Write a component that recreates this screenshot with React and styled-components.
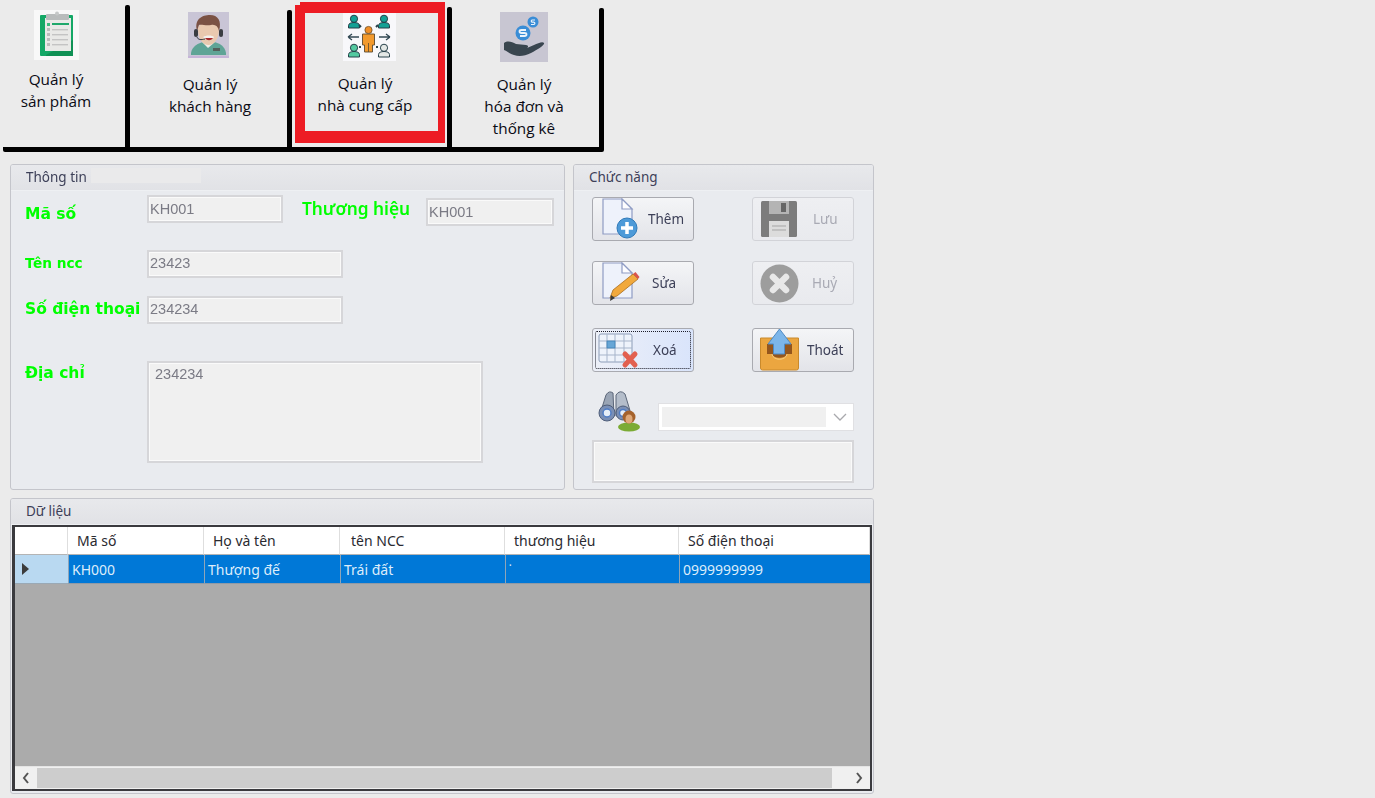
// App.jsx
import React from 'react';
import styled, { createGlobalStyle } from 'styled-components';

const GlobalStyle = createGlobalStyle`
  html, body { margin: 0; padding: 0; background: #ebebeb; }
  body { width: 1375px; height: 798px; overflow: hidden; font-family: "Noto Sans", sans-serif; }
  * { box-sizing: border-box; }
`;

const Page = styled.div`
  width: 1375px;
  height: 798px;
  background: #ebebeb;
`;

/* top menu */
const TabBar = styled.div`
  display: flex;
  width: 601px;
  height: 152px;
  margin-left: 3px;
  border-bottom: 5px solid #000;
  border-radius: 0 0 2px 2px;
`;

const Tab = styled.div`
  display: flex;
  flex-direction: column;
  align-items: center;
  width: ${({ $w }) => $w}px;
  padding-top: ${({ $top }) => $top}px;
  padding-right: ${({ $shift }) => $shift || 0}px;
`;

const Divider = styled.div`
  width: 5px;
  margin-top: ${({ $top }) => $top}px;
  background: #000;
  border-radius: 2px 2px 0 0;
`;

const RedFrame = styled.div`
  position: relative;
  display: flex;
  flex-direction: column;
  align-items: center;
  width: 150px;
  height: 141px;
  margin: 2px 2px 0 3px;
  border-style: solid;
  border-color: #ed1c24;
  border-width: 11px 7px 12px 10px;
  &::before {
    content: '';
    position: absolute;
    left: -10px;
    top: -11px;
    width: 5px;
    height: 3px;
    background: #ebebeb;
  }
`;

const TabLabel = styled.div`
  margin-top: ${({ $gap }) => $gap}px;
  margin-right: ${({ $shift }) => $shift || 0}px;
  font-family: "Open Sans", "Noto Sans", sans-serif;
  font-size: 15.3px;
  line-height: 22px;
  color: #0a0a14;
  text-align: center;
  white-space: nowrap;
`;

const TabIcon = styled.svg`
  display: block;
  flex: none;
  margin-right: ${({ $right }) => $right || 0}px;
  filter: blur(0.5px);
`;

/* panels */
const PanelRow = styled.div`
  display: flex;
  gap: 8px;
  margin: 12px 0 0 10px;
  filter: blur(0.35px);
`;

const Panel = styled.section`
  width: ${({ $w }) => $w}px;
  height: ${({ $h }) => $h}px;
  margin: ${({ $margin }) => $margin || 0};
  background: #e9ebef;
  border: 1px solid #c4c5cb;
  border-radius: 3px;
  overflow: hidden;
`;

const PanelHead = styled.header`
  display: flex;
  align-items: center;
  gap: 4px;
  height: 26px;
  padding: 0 0 1px 15px;
  background: linear-gradient(#e8e9ec, #e1e2e6);
  border-bottom: 1px solid #eef0f3;
  font-family: "Noto Sans", sans-serif;
  font-size: 13.5px;
  color: #3d4058;
`;

const Smudge = styled.span`
  width: 110px;
  height: 15px;
  margin-top: -3px;
  background: #eaeaeb;
`;

const InfoBody = styled.div`
  display: flex;
  flex-direction: column;
`;

const FormRow = styled.div`
  display: flex;
  align-items: flex-start;
  margin-top: ${({ $top }) => $top}px;
`;

const Label = styled.div`
  width: ${({ $w }) => $w || 122}px;
  margin-left: ${({ $left }) => $left ?? 14}px;
  margin-top: ${({ $dy }) => $dy || 0}px;
  font-family: "DejaVu Sans", sans-serif;
  font-weight: 700;
  font-size: ${({ $size }) => $size || 15.5}px;
  line-height: 20px;
  color: #00ff00;
  white-space: nowrap;
`;

const BrandLabel = styled(Label)`
  font-family: "Noto Sans", sans-serif;
  font-weight: 600;
  font-size: 17.3px;
`;

const Field = styled.div`
  width: ${({ $w }) => $w}px;
  height: ${({ $h }) => $h || 28}px;
  margin-top: ${({ $dy }) => $dy || 0}px;
  padding: ${({ $pad }) => $pad || '3px 1px 0 1px'};
  background: #f0f0f0;
  border: 2px solid #d6d6d9;
  box-shadow: inset 0 0 0 1px #fafafa;
  font-family: "Liberation Sans", sans-serif;
  font-size: 14.5px;
  line-height: 17px;
  color: #7b7b85;
`;

/* function panel */
const FuncBody = styled.div`
  display: flex;
  flex-direction: column;
  padding-left: 18px;
`;

const ButtonRow = styled.div`
  display: flex;
  gap: 58px;
  margin-top: ${({ $top }) => $top}px;
`;

const ActionButton = styled.button`
  position: relative;
  display: flex;
  align-items: center;
  width: 102px;
  height: 44px;
  padding: 0 0 0 ${({ $pad }) => $pad}px;
  background: linear-gradient(#f4f5f7, #e3e4e9);
  border: 1px solid #a9aab0;
  border-radius: 3px;
  font-family: "Noto Sans", sans-serif;
  font-size: 13.5px;
  color: #3d4058;
`;

const MutedButton = styled(ActionButton)`
  background: linear-gradient(#eeeff2, #e9eaee);
  border-color: #d2d3d8;
  color: #a9aab4;
`;

const FocusButton = styled(ActionButton)`
  background: linear-gradient(90deg, #edf0f8, #d9e4fb);
  border-color: #a9aab0;
  &::after {
    content: '';
    position: absolute;
    inset: 2px;
    border: 1px dotted #1c1c28;
    border-radius: 2px;
  }
`;

const ButtonText = styled.span`
  margin-left: ${({ $gap }) => $gap}px;
`;

const ButtonIcon = styled.svg`
  display: block;
  flex: none;
  margin-top: ${({ $dy }) => $dy || 0}px;
  filter: blur(0.3px);
`;

const SearchRow = styled.div`
  display: flex;
  align-items: flex-start;
  margin-top: 18px;
  padding-left: 5px;
`;

const Combo = styled.div`
  display: flex;
  align-items: center;
  width: 196px;
  height: 28px;
  margin: 13px 0 0 16px;
  padding: 3px;
  background: #fff;
  border: 1px solid #e0e0e3;
`;

const ComboInner = styled.div`
  width: 164px;
  height: 20px;
  background: #f0f0f0;
`;

const ComboArrow = styled.svg`
  display: block;
  margin-left: 7px;
`;

const NoteBox = styled.div`
  width: 262px;
  height: 43px;
  margin-top: 8px;
  background: #f0f0f0;
  border: 2px solid #d6d6d9;
  box-shadow: inset 0 0 0 1px #fafafa;
`;

/* data grid */
const DataGrid = styled.div`
  display: flex;
  flex-direction: column;
  width: 860px;
  height: 266px;
  margin-left: 1px;
  background: #ababab;
  border-style: solid;
  border-color: #3a3a3e;
  border-width: 2px 2px 2px 3px;
  font-family: "Noto Sans", sans-serif;
`;

const GridLine = styled.div`
  display: grid;
  grid-template-columns: 53px 136px 136px 165px 174px 1fr;
  height: ${({ $h }) => $h}px;
  flex: none;
`;

const HeadCell = styled.div`
  display: flex;
  align-items: center;
  padding-left: ${({ $pad }) => $pad}px;
  background: #fff;
  border-right: 1px solid #dedede;
  border-bottom: 1px solid #b4b4b4;
  font-size: 14px;
  color: #2a2a30;
  white-space: nowrap;
`;

const Cell = styled.div`
  display: flex;
  align-items: center;
  padding-left: 3px;
  background: #0078d7;
  border-left: 1px solid #8fa5b8;
  border-bottom: 1px solid #8f9aa6;
  font-size: 14px;
  color: #dcedfb;
  white-space: nowrap;
`;

const RowHeader = styled.div`
  display: flex;
  align-items: center;
  padding-left: 7px;
  background: #b9d9f1;
  border-bottom: 1px solid #9aa9b5;
`;

const RowArrow = styled.span`
  width: 0;
  height: 0;
  border-left: 7px solid #3c3c3c;
  border-top: 6px solid transparent;
  border-bottom: 6px solid transparent;
`;

const GridFill = styled.div`
  flex: 1;
  background: #ababab;
`;

const ScrollBar = styled.div`
  display: flex;
  align-items: center;
  flex: none;
  height: 23px;
  background: #f0f0f0;
  border-top: 1px solid #e4e4e4;
`;

const ScrollButton = styled.button`
  display: flex;
  align-items: center;
  justify-content: center;
  width: 22px;
  height: 100%;
  padding: 0;
  background: none;
  border: 0;
`;

const ScrollThumb = styled.div`
  flex: 1;
  height: 20px;
  margin-right: 16px;
  background: #cdcdcd;
`;

const ClipboardIcon = () => (
  <TabIcon width="45" height="50" viewBox="0 0 45 50">
    <rect width="45" height="50" fill="#f8f8f8" />
    <rect x="6" y="5" width="33" height="41" rx="1" fill="#14a866" />
    <path d="M12 45 L39 30 V46 H12Z" fill="#109155" />
    <rect x="11" y="8" width="26" height="33" fill="#e9e9e7" />
    <rect x="12" y="4" width="23" height="6" rx="1" fill="#b9bcbc" />
    <circle cx="23" cy="3.5" r="2" fill="#c6c8c8" />
    <rect x="13" y="13" width="3" height="3" fill="#3dbb80" />
    <rect x="18" y="13" width="17" height="2" fill="#1fa86b" />
    {[18, 23, 28, 33].map((y) => (
      <g key={y}>
        <rect x="13" y={y} width="3" height="3" fill="#bcbcbc" />
        <rect x="18" y={y + 1} width="16" height="1.4" fill="#c4c4c4" />
      </g>
    ))}
  </TabIcon>
);

const AgentIcon = () => (
  <TabIcon width="41" height="46" viewBox="0 0 41 46">
    <rect width="41" height="46" fill="#c9c5d6" />
    <rect y="44" width="41" height="2" fill="#c6b5d8" />
    <path d="M3 41 C4 34 11 31 15 30 L26 30 C31 31 37 34 38 41 L38 43 H3Z" fill="#5fa496" />
    <path d="M14 30 L20 36 L27 30 L25 27 H16Z" fill="#f2eee8" />
    <rect x="25" y="36" width="7" height="3" fill="#55605c" />
    <path d="M10 17 C10 8 31 8 31 17 C31 27 26 33 20.5 33 C15 33 10 27 10 17Z" fill="#e9c9af" />
    <path d="M9 19 C6 7 14 3 22 3 C30 3 34 9 31 19 C30 14 27 12 23 13 C18 14 13 12 11 13 C10 15 10 17 9 19Z" fill="#7b5244" />
    <rect x="6" y="17" width="4" height="8" rx="2" fill="#3a3d42" />
    <rect x="31" y="17" width="4" height="8" rx="2" fill="#3a3d42" />
    <path d="M15 25 C18 29 24 29 26 25 C24 23 18 23 15 25Z" fill="#f4f1ee" />
    <path d="M17 26 C19 29 23 29 25 26Z" fill="#a5282a" />
    <path d="M9 25 C10 28 13 28 17 27" stroke="#3a3d42" strokeWidth="1" fill="none" />
  </TabIcon>
);

const Person = ({ x, y, color }) => (
  <g transform={`translate(${x} ${y})`}>
    <circle cx="6" cy="3.8" r="3.6" fill={color} stroke="#26404a" strokeWidth="1" />
    <path d="M0.5 13 V10.5 C0.5 8.5 3 7.5 6 7.5 C9 7.5 11.5 8.5 11.5 10.5 V13Z" fill={color} stroke="#26404a" strokeWidth="1" />
  </g>
);

const SupplierIcon = () => (
  <TabIcon $right={4} width="53" height="48" viewBox="0 0 53 48">
    <rect width="53" height="48" fill="#f8f8fb" />
    <Person x="5" y="2" color="#14a094" />
    <Person x="35" y="2" color="#14a094" />
    <Person x="5" y="31" color="#53c9a0" />
    <Person x="35" y="31" color="#e4e8e6" />
    <circle cx="25.5" cy="17" r="3.6" fill="#f08f28" stroke="#6b4b26" strokeWidth="0.8" />
    <path d="M19.5 21 H31.5 V32 H29.5 V39 H21.5 V32 H19.5Z" fill="#f29a2e" stroke="#5a4a30" strokeWidth="0.9" />
    <path d="M25.5 30 V39" stroke="#5a4a30" strokeWidth="0.8" />
    <path d="M5 24 H16 M5 24 L9 21 M5 24 L9 27 M36 24 H47 M47 24 L43 21 M47 24 L43 27" stroke="#344a55" strokeWidth="1.3" fill="none" />
    <path d="M18 14 L16 12 M33 14 L35 12" stroke="#26404a" strokeWidth="2" />
    <rect x="16" y="33" width="2" height="2" fill="#26404a" />
    <rect x="33" y="33" width="2" height="2" fill="#26404a" />
  </TabIcon>
);

const MoneyIcon = () => (
  <TabIcon width="48" height="50" viewBox="0 0 48 50">
    <rect width="48" height="50" fill="#c8c6d2" />
    <circle cx="33" cy="10" r="5.5" fill="#3a8dd6" />
    <circle cx="23" cy="21" r="7.5" fill="#3a8dd6" />
    <path d="M35 8 H32 A1.2 1.2 0 0 0 32 10.2 H34 A1.2 1.2 0 0 1 34 12.5 H31" stroke="#eaf3fb" strokeWidth="1.2" fill="none" />
    <path d="M26 18 H21.5 A2 1.5 0 0 0 21.5 21 H24.5 A2 1.5 0 0 1 24.5 24 H20" stroke="#eaf3fb" strokeWidth="1.8" fill="none" />
    <path d="M4 31 C8 28 12 30 16 32 L26 33 C28 33 29 35 27 36 L34 33 C38 31 43 29 44 31 C45 33 38 37 31 41 C25 44 19 45 14 43 C10 42 7 39 4 38Z" fill="#39454f" />
  </TabIcon>
);

const PageShape = () => (
  <g>
    <path d="M1 1 H20 L30 11 V36 H1Z" fill="#eef2fb" stroke="#8f9cc4" strokeWidth="1.2" />
    <path d="M20 1 V11 H30Z" fill="#fdfdff" stroke="#8f9cc4" strokeWidth="1.2" />
  </g>
);

const AddIcon = () => (
  <ButtonIcon width="36" height="42" viewBox="0 0 36 42">
    <PageShape />
    <circle cx="25" cy="30" r="10" fill="#4d9ad8" stroke="#2f79b8" />
    <path d="M25 24 V36 M19 30 H31" stroke="#fff" strokeWidth="3.5" />
  </ButtonIcon>
);

const EditIcon = () => (
  <ButtonIcon width="38" height="42" viewBox="0 0 38 42">
    <PageShape />
    <path d="M8 36 L11 28 L31 12 L36 17 L15 34Z" fill="#f1a93d" stroke="#a86d1e" strokeWidth="0.8" />
    <path d="M31 12 L33.5 10 L37.5 15 L36 17Z" fill="#d9534a" />
    <path d="M8 39 L9 33 L13 36Z" fill="#3a3a3a" />
  </ButtonIcon>
);

const SaveIcon = () => (
  <ButtonIcon width="36" height="36" viewBox="0 0 36 36">
    <rect width="36" height="36" rx="1.5" fill="#7c7c7c" />
    <rect x="8" y="0" width="20" height="13" fill="#b4b4b4" />
    <rect x="20" y="2" width="5" height="9" fill="#666" />
    <rect x="8" y="20" width="20" height="16" fill="#dcdcdc" />
    <path d="M11 25 H25 M11 29 H25" stroke="#a5a5a5" strokeWidth="1" />
  </ButtonIcon>
);

const CancelIcon = () => (
  <ButtonIcon width="39" height="39" viewBox="0 0 39 39">
    <circle cx="19.5" cy="19.5" r="19" fill="#9d9d9d" />
    <path d="M13 13 L26 26 M26 13 L13 26" stroke="#e8e8e8" strokeWidth="6.5" strokeLinecap="round" />
  </ButtonIcon>
);

const DeleteIcon = () => (
  <ButtonIcon width="43" height="38" viewBox="0 0 43 38">
    <rect x="2" y="3" width="33" height="28" rx="2" fill="#eef3fb" stroke="#8d9db8" />
    <path d="M10 3 V31 M18 3 V31 M27 3 V31 M2 10 H35 M2 17 H35 M2 24 H35" stroke="#a7b5cb" strokeWidth="1" />
    <rect x="10" y="10" width="8" height="7" fill="#67a6d6" stroke="#3d7fb4" strokeWidth="0.8" />
    <path d="M28 23 L38 34 M38 23 L28 34" stroke="#e2604f" strokeWidth="5" strokeLinecap="round" />
  </ButtonIcon>
);

const ExitIcon = () => (
  <ButtonIcon width="39" height="42" viewBox="0 0 39 42" $dy={-1}>
    <path d="M0.5 9 H38.5 V39 Q38.5 41 36.5 41 H2.5 Q0.5 41 0.5 39Z" fill="#eba640" stroke="#c98a2c" />
    <path d="M7 15 H32 V25 H27 C26 30 13 30 12 25 H7Z" fill="#94561d" />
    <path d="M12 25 C13 32 26 32 27 25" stroke="#f6cf86" strokeWidth="1" fill="none" />
    <path d="M19.5 0 L31 15 H24.5 V25 H13.5 V15 H8Z" fill="#7cb6ea" stroke="#4f8ac4" />
  </ButtonIcon>
);

const FinderIcon = () => (
  <svg width="45" height="42" viewBox="0 0 45 42" style={{ display: 'block', flex: 'none' }}>
    <path d="M3 24 L9 5 Q12 0 16 3 L17 26Z" fill="#9aa5b5" stroke="#5b6678" />
    <path d="M19 26 L19 5 Q23 -1 28 4 L34 24Z" fill="#b4bdca" stroke="#5b6678" />
    <circle cx="10" cy="23" r="8" fill="#7a8fb5" stroke="#4f5d78" />
    <circle cx="10" cy="23" r="4" fill="#e6eef8" stroke="#4f7cc4" strokeWidth="1.5" />
    <circle cx="26" cy="23" r="7" fill="#7a8fb5" stroke="#4f5d78" />
    <circle cx="26" cy="23" r="3.5" fill="#e6eef8" stroke="#4f7cc4" strokeWidth="1.5" />
    <ellipse cx="32" cy="37" rx="11" ry="4.5" fill="#7bab34" />
    <circle cx="32" cy="27" r="6.5" fill="#a5622c" />
    <ellipse cx="32" cy="29" rx="3.5" ry="4.5" fill="#dfa878" />
  </svg>
);

const columns = [
  { text: '', pad: 0 },
  { text: 'Mã số', pad: 9 },
  { text: 'Họ và tên', pad: 9 },
  { text: 'tên NCC', pad: 11 },
  { text: 'thương hiệu', pad: 9 },
  { text: 'Số điện thoại', pad: 9 },
];

const cells = ['KH000', 'Thượng đế', 'Trái đất', '˙', '0999999999'];

export default function App() {
  return (
    <Page>
      <GlobalStyle />
      <TabBar>
        <Tab $w={122} $top={10} $shift={16}>
          <ClipboardIcon />
          <TabLabel $gap={8}>Quản lý<br />sản phẩm</TabLabel>
        </Tab>
        <Divider $top={5} />
        <Tab $w={157} $top={12}>
          <AgentIcon />
          <TabLabel $gap={15} $shift={-3}>Quản lý<br />khách hàng</TabLabel>
        </Tab>
        <Divider $top={10} />
        <RedFrame>
          <SupplierIcon />
          <TabLabel $gap={11} $shift={13}>Quản lý<br />nhà cung cấp</TabLabel>
        </RedFrame>
        <Divider $top={7} />
        <Tab $w={147} $top={12} $shift={3}>
          <MoneyIcon />
          <TabLabel $gap={11}>Quản lý<br />hóa đơn và<br />thống kê</TabLabel>
        </Tab>
        <Divider $top={8} />
      </TabBar>

      <PanelRow>
        <Panel $w={555} $h={326}>
          <PanelHead>Thông tin<Smudge /></PanelHead>
          <InfoBody>
            <FormRow $top={4}>
              <Label $dy={9}>Mã số</Label>
              <Field $w={136} $pad="4px 1px 0 1px">KH001</Field>
              <BrandLabel $left={19} $w={124} $dy={4}>Thương hiệu</BrandLabel>
              <Field $w={128} $dy={3} $pad="4px 1px 0 1px">KH001</Field>
            </FormRow>
            <FormRow $top={24}>
              <Label $dy={3} $size={13.7}>Tên ncc</Label>
              <Field $w={196}>23423</Field>
            </FormRow>
            <FormRow $top={18}>
              <Label $dy={3}>Số điện thoại</Label>
              <Field $w={196}>234234</Field>
            </FormRow>
            <FormRow $top={37}>
              <Label $dy={2}>Địa chỉ</Label>
              <Field $w={336} $h={102} $pad="3px 6px">234234</Field>
            </FormRow>
          </InfoBody>
        </Panel>

        <Panel $w={301} $h={326}>
          <PanelHead>Chức năng</PanelHead>
          <FuncBody>
            <ButtonRow $top={6}>
              <ActionButton $pad={9}><AddIcon /><ButtonText $gap={10}>Thêm</ButtonText></ActionButton>
              <MutedButton $pad={8}><SaveIcon /><ButtonText $gap={16}>Lưu</ButtonText></MutedButton>
            </ButtonRow>
            <ButtonRow $top={20}>
              <ActionButton $pad={9}><EditIcon /><ButtonText $gap={12}>Sửa</ButtonText></ActionButton>
              <MutedButton $pad={7}><CancelIcon /><ButtonText $gap={13}>Huỷ</ButtonText></MutedButton>
            </ButtonRow>
            <ButtonRow $top={23}>
              <FocusButton $pad={4}><DeleteIcon /><ButtonText $gap={13}>Xoá</ButtonText></FocusButton>
              <ActionButton $pad={7}><ExitIcon /><ButtonText $gap={8}>Thoát</ButtonText></ActionButton>
            </ButtonRow>
            <SearchRow>
              <FinderIcon />
              <Combo>
                <ComboInner />
                <ComboArrow width="14" height="8" viewBox="0 0 14 8">
                  <path d="M1 1 L7 7 L13 1" stroke="#a9a9ad" strokeWidth="1.3" fill="none" />
                </ComboArrow>
              </Combo>
            </SearchRow>
            <NoteBox />
          </FuncBody>
        </Panel>
      </PanelRow>

      <Panel $w={864} $h={296} $margin="8px 0 0 10px">
        <PanelHead>Dữ liệu</PanelHead>
        <DataGrid>
          <GridLine $h={28}>
            {columns.map((c, i) => (
              <HeadCell key={i} $pad={c.pad}>{c.text}</HeadCell>
            ))}
          </GridLine>
          <GridLine $h={29}>
            <RowHeader><RowArrow /></RowHeader>
            {cells.map((c) => (
              <Cell key={c}>{c}</Cell>
            ))}
          </GridLine>
          <GridFill />
          <ScrollBar>
            <ScrollButton aria-label="trái">
              <svg width="8" height="12" viewBox="0 0 8 12"><path d="M6 1 L2 6 L6 11" stroke="#555" strokeWidth="2" fill="none" /></svg>
            </ScrollButton>
            <ScrollThumb />
            <ScrollButton aria-label="phải">
              <svg width="8" height="12" viewBox="0 0 8 12"><path d="M2 1 L6 6 L2 11" stroke="#555" strokeWidth="2" fill="none" /></svg>
            </ScrollButton>
          </ScrollBar>
        </DataGrid>
      </Panel>
    </Page>
  );
}
